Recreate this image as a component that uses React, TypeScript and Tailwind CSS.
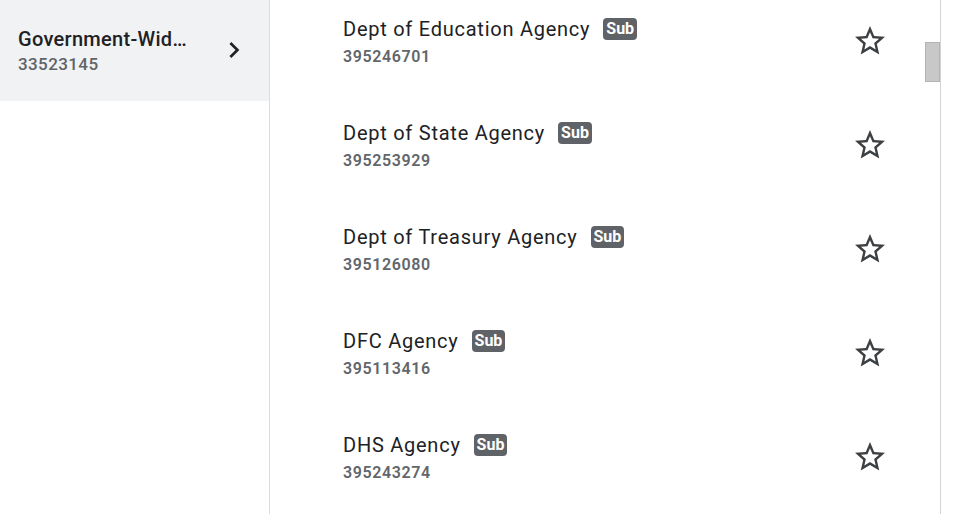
import React from 'react';

const agencies = [
  { name: 'Dept of Education Agency', id: '395246701' },
  { name: 'Dept of State Agency', id: '395253929' },
  { name: 'Dept of Treasury Agency', id: '395126080' },
  { name: 'DFC Agency', id: '395113416' },
  { name: 'DHS Agency', id: '395243274' },
];

function StarIcon() {
  return (
    <svg width="36" height="36" viewBox="0 0 24 24" fill="#3c4043">
      <path d="M22 9.24l-7.19-.62L12 2 9.19 8.63 2 9.24l5.46 4.73L5.82 21 12 17.27 18.18 21l-1.63-7.03L22 9.24zM12 15.4l-3.76 2.27 1-4.28-3.32-2.88 4.38-.38L12 6.1l1.71 4.04 4.38.38-3.32 2.88 1 4.28L12 15.4z" />
    </svg>
  );
}

function AgencyRow({ name, id }: { name: string; id: string }) {
  return (
    <div className="flex items-center pl-[73px] pr-[52px] pt-[15px] pb-[37px]">
      <div className="flex-1 min-w-0">
        <div className="flex items-center h-[28px]">
          <span className="text-[20px] leading-[28px] text-[#202124] tracking-[0.75px]">{name}</span>
          <span className="ml-[13px] rounded-[4px] bg-[#5f6368] px-[3px] h-[22px] flex items-center text-[16px] font-bold text-white">
            Sub
          </span>
        </div>
        <div className="mt-[4px] text-[16px] leading-[20px] font-semibold text-[#62666a] tracking-[0.6px]">{id}</div>
      </div>
      <button className="flex items-center justify-center w-[36px] h-[36px]">
        <StarIcon />
      </button>
    </div>
  );
}

export default function App() {
  return (
    <div className="flex h-[514px] w-[958px] overflow-hidden bg-white" style={{ fontFamily: 'Roboto, "Liberation Sans", sans-serif' }}>
      <aside className="w-[270px] shrink-0 border-r border-[#dadce0]">
        <div className="flex items-center h-[101px] bg-[#f1f2f4] pl-[18px]">
          <div className="w-[178px] min-w-0">
            <div className="text-[20px] leading-[26px] font-medium text-[#202124] truncate tracking-[0.3px]">Government-Wide Agency</div>
            <div className="mt-[1px] text-[17px] leading-[22px] font-medium text-[#5f6368] tracking-[0.4px]">33523145</div>
          </div>
          <svg className="ml-[22px] -mt-[2px]" width="32" height="32" viewBox="0 0 24 24" fill="#202124">
            <path d="M10 6L8.59 7.41 13.17 12l-4.58 4.59L10 18l6-6z" />
          </svg>
        </div>
      </aside>
      <main className="relative w-[671px] shrink-0 border-r border-[#d4d4d4] overflow-hidden">
        {agencies.map((a) => (
          <AgencyRow key={a.id} {...a} />
        ))}
        <div className="absolute right-0 top-[42px] w-[15px] h-[40px] bg-[#c8c8c8] border border-[#b4b4b4]" />
      </main>
    </div>
  );
}
